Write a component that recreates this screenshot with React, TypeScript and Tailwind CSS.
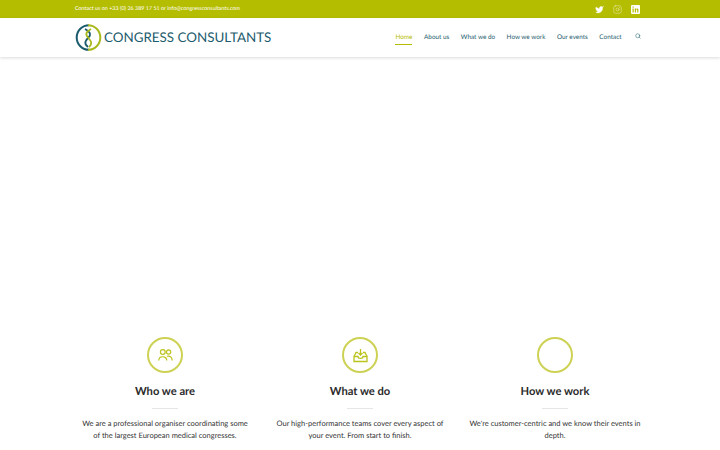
import { Instagram, Search, Twitter } from 'lucide-react';
import type { ReactNode } from 'react';

const navItems = ['About us', 'What we do', 'How we work', 'Our events', 'Contact'];

function Logo() {
  return (
    <svg width="27" height="27" viewBox="0 0 27 27" fill="none" className="shrink-0">
      <path d="M14 1.2A12.3 12.3 0 0 0 14 25.8" stroke="#1d5c6e" strokeWidth="2" />
      <path d="M13 1.2A12.3 12.3 0 0 1 13 25.8" stroke="#a9b81c" strokeWidth="2" />
      <path d="M10 5c6 3 6 6 3.5 8.5S8 19 13 23" stroke="#1d5c6e" strokeWidth="1.8" />
      <path d="M16 5c-5 3-6 5-3 8.5s5 6 1 9.5" stroke="#a9b81c" strokeWidth="1.8" />
    </svg>
  );
}

function LinkedinBox() {
  return (
    <svg width="9" height="9" viewBox="0 0 9 9">
      <rect width="9" height="9" rx="1" fill="white" />
      <rect x="1.5" y="3.5" width="1.2" height="4" fill="#b5bd00" />
      <rect x="1.5" y="1.5" width="1.2" height="1.2" fill="#b5bd00" />
      <path d="M3.8 3.5H5v.6c.5-.9 2.4-1 2.4.9v2.5H6.2V5.3c0-1-1.2-1-1.2 0v2.2H3.8z" fill="#b5bd00" />
    </svg>
  );
}

function PeopleIcon() {
  return (
    <svg width="15" height="14" viewBox="0 0 15 14" fill="none" stroke="#bcc31c" strokeWidth="1.2">
      <circle cx="4.8" cy="4" r="2.4" />
      <circle cx="10.6" cy="4" r="2.1" />
      <path d="M.8 12.5c0-5 8-5 8 0" />
      <path d="M9 8.3c2.5-.8 5.2.8 5.2 4.2" />
    </svg>
  );
}

function TrayIcon() {
  return (
    <svg width="15" height="15" viewBox="0 0 15 15" fill="none" stroke="#bcc31c" strokeWidth="1.3">
      <path d="M1 8.5h4c0 2.5 5 2.5 5 0h4v5H1z" />
      <path d="M1 8.5l2-4h2M14 8.5l-2-4h-2" />
      <path d="M7.5 1v6M5.500 5l2 2 2-2" />
    </svg>
  );
}

function Feature({ icon, title, text }: { icon?: ReactNode; title: string; text: ReactNode }) {
  return (
    <div className="flex w-[195px] flex-col items-center text-center">
      <div className="flex h-[36px] w-[36px] items-center justify-center rounded-full border-2 border-[#cdd255]">
        {icon}
      </div>
      <h3 className="mt-[9px] text-[11.2px] leading-[20px] font-bold text-[#2b2b2b]">{title}</h3>
      <div className="mt-[6px] h-px w-[26px] bg-[#e6e6e6]" />
      <p className="mt-[9px] text-[7.5px] leading-[12px] whitespace-nowrap text-[#333333]">{text}</p>
    </div>
  );
}

export default function App() {
  return (
    <div className="h-[450px] w-[720px] overflow-hidden bg-white font-['Lato','Open_Sans',sans-serif] [text-rendering:geometricPrecision]">
      <div className="flex h-[18px] items-center justify-between bg-[#b5bd00] pr-[80px] pl-[75px]">
        <span className="pt-px text-[5.4px] text-white">Contact us on +33 (0) 26 389 17 51 or info@congressconsultants.com</span>
        <div className="flex items-center gap-[9px] text-white">
          <Twitter size={9} fill="white" strokeWidth={1} />
          <Instagram size={9} strokeWidth={1} />
          <LinkedinBox />
        </div>
      </div>

      <header className="flex h-[39px] items-center justify-between bg-white pr-[79px] pl-[75px] shadow-[0_1px_3px_rgba(0,0,0,0.15)]">
        <div className="flex items-center gap-[2px]">
          <Logo />
          <span className="text-[13.4px] whitespace-nowrap text-[#1d5c6e]">CONGRESS CONSULTANTS</span>
        </div>
        <nav className="flex items-center gap-[11.5px] text-[6.4px] text-[#1d5c6e]">
          <span className="relative text-[#b5bd00]">
            Home
            <span className="absolute top-[11px] left-0 h-px w-full bg-[#b5bd00]" />
          </span>
          {navItems.map((item) => (
            <span key={item}>{item}</span>
          ))}
          <Search size={6} strokeWidth={2} className="mb-[2px] ml-[2px]" />
        </nav>
      </header>

      <main className="flex pt-[280px] pl-[67.5px]">
        <Feature
          icon={<PeopleIcon />}
          title="Who we are"
          text={<>We are a professional organiser coordinating some<br />of the largest European medical congresses.</>}
        />
        <Feature
          icon={<TrayIcon />}
          title="What we do"
          text={<>Our high-performance teams cover every aspect of<br />your event. From start to finish.</>}
        />
        <Feature
          title="How we work"
          text={<>We're customer-centric and we know their events in<br />depth.</>}
        />
      </main>
    </div>
  );
}
